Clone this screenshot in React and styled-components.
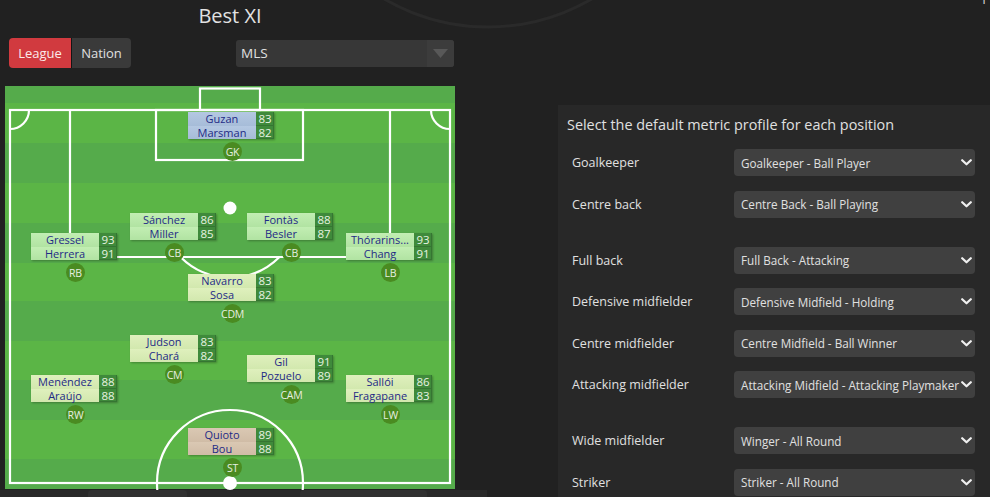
import styled, { createGlobalStyle } from 'styled-components';

const GlobalStyle = createGlobalStyle`
  html, body {
    margin: 0;
    padding: 0;
    background: #212121;
    overflow: hidden;
  }
  body {
    font-family: "Open Sans", "Noto Sans", sans-serif;
    color: #dedede;
  }
  * { box-sizing: border-box; }
`;

const Page = styled.div`
  position: relative;
  display: flex;
  width: 990px;
  height: 497px;
  overflow: hidden;
`;

const Backdrop = styled.svg`
  position: absolute;
  inset: 0;
  pointer-events: none;
  z-index: 0;
`;

const LeftColumn = styled.div`
  position: relative;
  z-index: 1;
  width: 460px;
  padding-left: 5px;
  display: flex;
  flex-direction: column;
`;

const Title = styled.h1`
  margin: 0;
  width: 450px;
  text-align: center;
  font-size: 20px;
  font-weight: 400;
  line-height: 32px;
  color: #e2e2e2;
`;

const Controls = styled.div`
  margin-top: 6px;
  height: 30px;
  display: flex;
  align-items: center;
  padding-left: 4px;
`;

const Toggle = styled.div`
  display: flex;
  height: 30px;
  border-radius: 4px;
  overflow: hidden;
`;

const ToggleButton = styled.button`
  border: none;
  margin: 0;
  padding: 0;
  width: ${p => p.$width}px;
  height: 30px;
  font-family: inherit;
  font-size: 13px;
  color: ${p => (p.$active ? '#fbeaea' : '#e0e0e0')};
  background: ${p => (p.$active ? '#d13a3f' : '#3a3a3a')};
  border-right: ${p => (p.$active ? '1px solid #151515' : 'none')};
`;

const LeagueSelect = styled.div`
  margin-left: 105px;
  width: 218px;
  height: 27px;
  display: flex;
  align-items: center;
  background: #373737;
  border-radius: 3px;
  overflow: hidden;
`;

const LeagueValue = styled.span`
  flex: 1;
  padding-left: 5px;
  font-size: 13.5px;
  color: #e0e0e0;
`;

const LeagueArrow = styled.span`
  width: 27px;
  height: 27px;
  display: flex;
  align-items: center;
  justify-content: center;
  background: #3c3c3c;
`;

const Pitch = styled.div`
  position: relative;
  margin-top: 18px;
  width: 450px;
  height: 404px;
  background: linear-gradient(
    to bottom,
    #55ab4b 0 17px,
    #5bb546 17px 57px,
    #55ab4b 57px 97px,
    #5bb546 97px 137px,
    #55ab4b 137px 177px,
    #5bb546 177px 215px,
    #55ab4b 215px 255px,
    #5bb546 255px 294px,
    #55ab4b 294px 334px,
    #5bb546 334px 373px,
    #55ab4b 373px 404px
  );
`;

const Markings = styled.svg`
  position: absolute;
  inset: 0;
`;

const Node = styled.div.attrs(p => ({
  style: { left: `${p.$x}px`, top: `${p.$y}px` },
}))`
  position: absolute;
  width: 86px;
  display: flex;
  flex-direction: column;
  align-items: center;
`;

const Card = styled.div`
  display: flex;
  flex-direction: column;
  box-shadow: 1px 1px 2px rgba(0, 0, 0, 0.28);
`;

const CardRow = styled.div`
  display: flex;
  height: 13.5px;
`;

const roleColors = {
  gk: ['#b4c8e2', '#a6bcd8'],
  def: ['#c2eeb3', '#b1e3a2'],
  mid: ['#dff0bd', '#d2e8ae'],
  att: ['#dac8b3', '#d0bca6'],
};

const NameCell = styled.div`
  width: 68px;
  height: 100%;
  display: flex;
  align-items: center;
  justify-content: center;
  font-size: 11px;
  color: #1f2a86;
  white-space: nowrap;
  background: linear-gradient(
    to bottom,
    ${p => roleColors[p.$role][0]},
    ${p => roleColors[p.$role][1]}
  );
`;

const RatingCell = styled.div`
  width: 18px;
  height: 100%;
  display: flex;
  align-items: center;
  justify-content: center;
  font-size: 11.5px;
  color: #e8f3e2;
  background: #3f8a3b;
  box-shadow: inset -1px -1px 0 rgba(0, 0, 0, 0.15);
`;

const PositionBadge = styled.div`
  margin-top: 3px;
  margin-left: 3px;
  width: 19px;
  height: 19px;
  border-radius: 50%;
  background: #4a8b21;
  color: #e6efe0;
  font-size: 10.5px;
  display: flex;
  align-items: center;
  justify-content: center;
  letter-spacing: -0.2px;
`;

const BottomStrip = styled.div`
  margin-left: -5px;
  margin-top: 1px;
  width: 487px;
  height: 7px;
  background: #292929;
  display: flex;
`;

const StripPill = styled.span`
  margin-left: ${p => p.$offset}px;
  width: ${p => p.$width}px;
  height: 7px;
  border-radius: 4px 4px 0 0;
  background: #303030;
`;

const RightColumn = styled.div`
  position: relative;
  z-index: 1;
  margin-left: 98px;
  flex: 1;
  display: flex;
  flex-direction: column;
`;

const CornerLabel = styled.span`
  align-self: flex-end;
  margin-top: -8px;
  margin-right: 0;
  font-size: 13px;
  line-height: 15px;
  color: #cfcfcf;
`;

const Panel = styled.section`
  margin-top: 98px;
  flex: 1;
  background: #282828;
  padding: 9px 15px 0 9px;
`;

const PanelTitle = styled.h2`
  margin: 0;
  font-size: 14.4px;
  font-weight: 400;
  line-height: 22px;
  color: #e0e0e0;
`;

const Rows = styled.div`
  margin-top: 13px;
  padding-left: 5px;
  display: flex;
  flex-direction: column;
  gap: 14.5px;
`;

const Row = styled.div`
  display: grid;
  grid-template-columns: 162px 241px;
  align-items: center;
  height: 27px;
  margin-top: ${p => (p.$groupStart ? '14.5px' : '0')};
`;

const RowLabel = styled.span`
  font-size: 12.5px;
  color: #e0e0e0;
`;

const ProfileSelect = styled.div`
  height: 27px;
  display: flex;
  align-items: center;
  justify-content: space-between;
  padding: 0 3px 0 7px;
  background: #404040;
  border-radius: 4px;
  font-size: 11.7px;
  color: #e0e0e0;
  white-space: nowrap;
`;

const Chevron = () => (
  <svg width="11" height="7" viewBox="0 0 11 7">
    <path d="M1.2 1.2 L5.5 5.3 L9.8 1.2" fill="none" stroke="#f0f0f0" strokeWidth="2.2" strokeLinecap="round" strokeLinejoin="round" />
  </svg>
);

const players = [
  { pos: 'GK', role: 'gk', x: 183, y: 26, names: [['Guzan', 83], ['Marsman', 82]] },
  { pos: 'CB', role: 'def', x: 125, y: 127, names: [['Sánchez', 86], ['Miller', 85]] },
  { pos: 'CB', role: 'def', x: 242, y: 127, names: [['Fontàs', 88], ['Besler', 87]] },
  { pos: 'RB', role: 'def', x: 26, y: 147, names: [['Gressel', 93], ['Herrera', 91]] },
  { pos: 'LB', role: 'def', x: 341, y: 147, names: [['Thórarins...', 93], ['Chang', 91]] },
  { pos: 'CDM', role: 'mid', x: 183, y: 188, names: [['Navarro', 83], ['Sosa', 82]] },
  { pos: 'CM', role: 'mid', x: 125, y: 249, names: [['Judson', 83], ['Chará', 82]] },
  { pos: 'CAM', role: 'mid', x: 242, y: 269, names: [['Gil', 91], ['Pozuelo', 89]] },
  { pos: 'RW', role: 'mid', x: 26, y: 289, names: [['Menéndez', 88], ['Araújo', 88]] },
  { pos: 'LW', role: 'mid', x: 341, y: 289, names: [['Sallói', 86], ['Fragapane', 83]] },
  { pos: 'ST', role: 'att', x: 183, y: 342, names: [['Quioto', 89], ['Bou', 88]] },
];

const profiles = [
  { label: 'Goalkeeper', value: 'Goalkeeper - Ball Player' },
  { label: 'Centre back', value: 'Centre Back - Ball Playing' },
  { label: 'Full back', value: 'Full Back - Attacking', groupStart: true },
  { label: 'Defensive midfielder', value: 'Defensive Midfield - Holding' },
  { label: 'Centre midfielder', value: 'Centre Midfield - Ball Winner' },
  { label: 'Attacking midfielder', value: 'Attacking Midfield - Attacking Playmaker' },
  { label: 'Wide midfielder', value: 'Winger - All Round', groupStart: true },
  { label: 'Striker', value: 'Striker - All Round' },
];

const PitchLines = () => (
  <Markings width="450" height="404" viewBox="0 0 450 404">
    <g fill="none" stroke="#ffffff" strokeWidth="2.2">
      <rect x="195" y="2.5" width="60" height="21.5" />
      <rect x="5" y="24" width="440" height="373" />
      <rect x="151" y="24" width="147" height="50" />
      <path d="M65 24 V171 H385 V24" />
      <path d="M175.5 171 A70 70 0 0 0 274.5 171" />
      <path d="M5 43 A19 19 0 0 0 24 24" />
      <path d="M426 24 A19 19 0 0 0 445 43" />
      <circle cx="225" cy="397" r="73" />
    </g>
    <circle cx="225" cy="122" r="6.5" fill="#ffffff" />
    <circle cx="225" cy="397" r="7" fill="#ffffff" />
  </Markings>
);

export default function App() {
  return (
    <Page>
      <GlobalStyle />
      <Backdrop width="990" height="497" viewBox="0 0 990 497">
        <circle cx="488" cy="-179" r="206" fill="none" stroke="#2a2a2a" strokeWidth="3" />
      </Backdrop>

      <LeftColumn>
        <Title>Best XI</Title>
        <Controls>
          <Toggle>
            <ToggleButton $active $width={63}>League</ToggleButton>
            <ToggleButton $width={59}>Nation</ToggleButton>
          </Toggle>
          <LeagueSelect>
            <LeagueValue>MLS</LeagueValue>
            <LeagueArrow>
              <svg width="15" height="9" viewBox="0 0 15 9">
                <polygon points="0,0 15,0 7.5,9" fill="#585858" />
              </svg>
            </LeagueArrow>
          </LeagueSelect>
        </Controls>

        <Pitch>
          <PitchLines />
          {players.map(p => (
            <Node key={p.pos + p.x} $x={p.x} $y={p.y}>
              <Card>
                {p.names.map(([name, rating]) => (
                  <CardRow key={name}>
                    <NameCell $role={p.role}>{name}</NameCell>
                    <RatingCell>{rating}</RatingCell>
                  </CardRow>
                ))}
              </Card>
              <PositionBadge>{p.pos}</PositionBadge>
            </Node>
          ))}
        </Pitch>
        <BottomStrip>
          <StripPill $offset={88} $width={99} />
          <StripPill $offset={113} $width={127} />
        </BottomStrip>
      </LeftColumn>

      <RightColumn>
        <CornerLabel>P</CornerLabel>
        <Panel>
          <PanelTitle>Select the default metric profile for each position</PanelTitle>
          <Rows>
            {profiles.map(r => (
              <Row key={r.label} $groupStart={r.groupStart}>
                <RowLabel>{r.label}</RowLabel>
                <ProfileSelect>
                  <span>{r.value}</span>
                  <Chevron />
                </ProfileSelect>
              </Row>
            ))}
          </Rows>
        </Panel>
      </RightColumn>
    </Page>
  );
}
